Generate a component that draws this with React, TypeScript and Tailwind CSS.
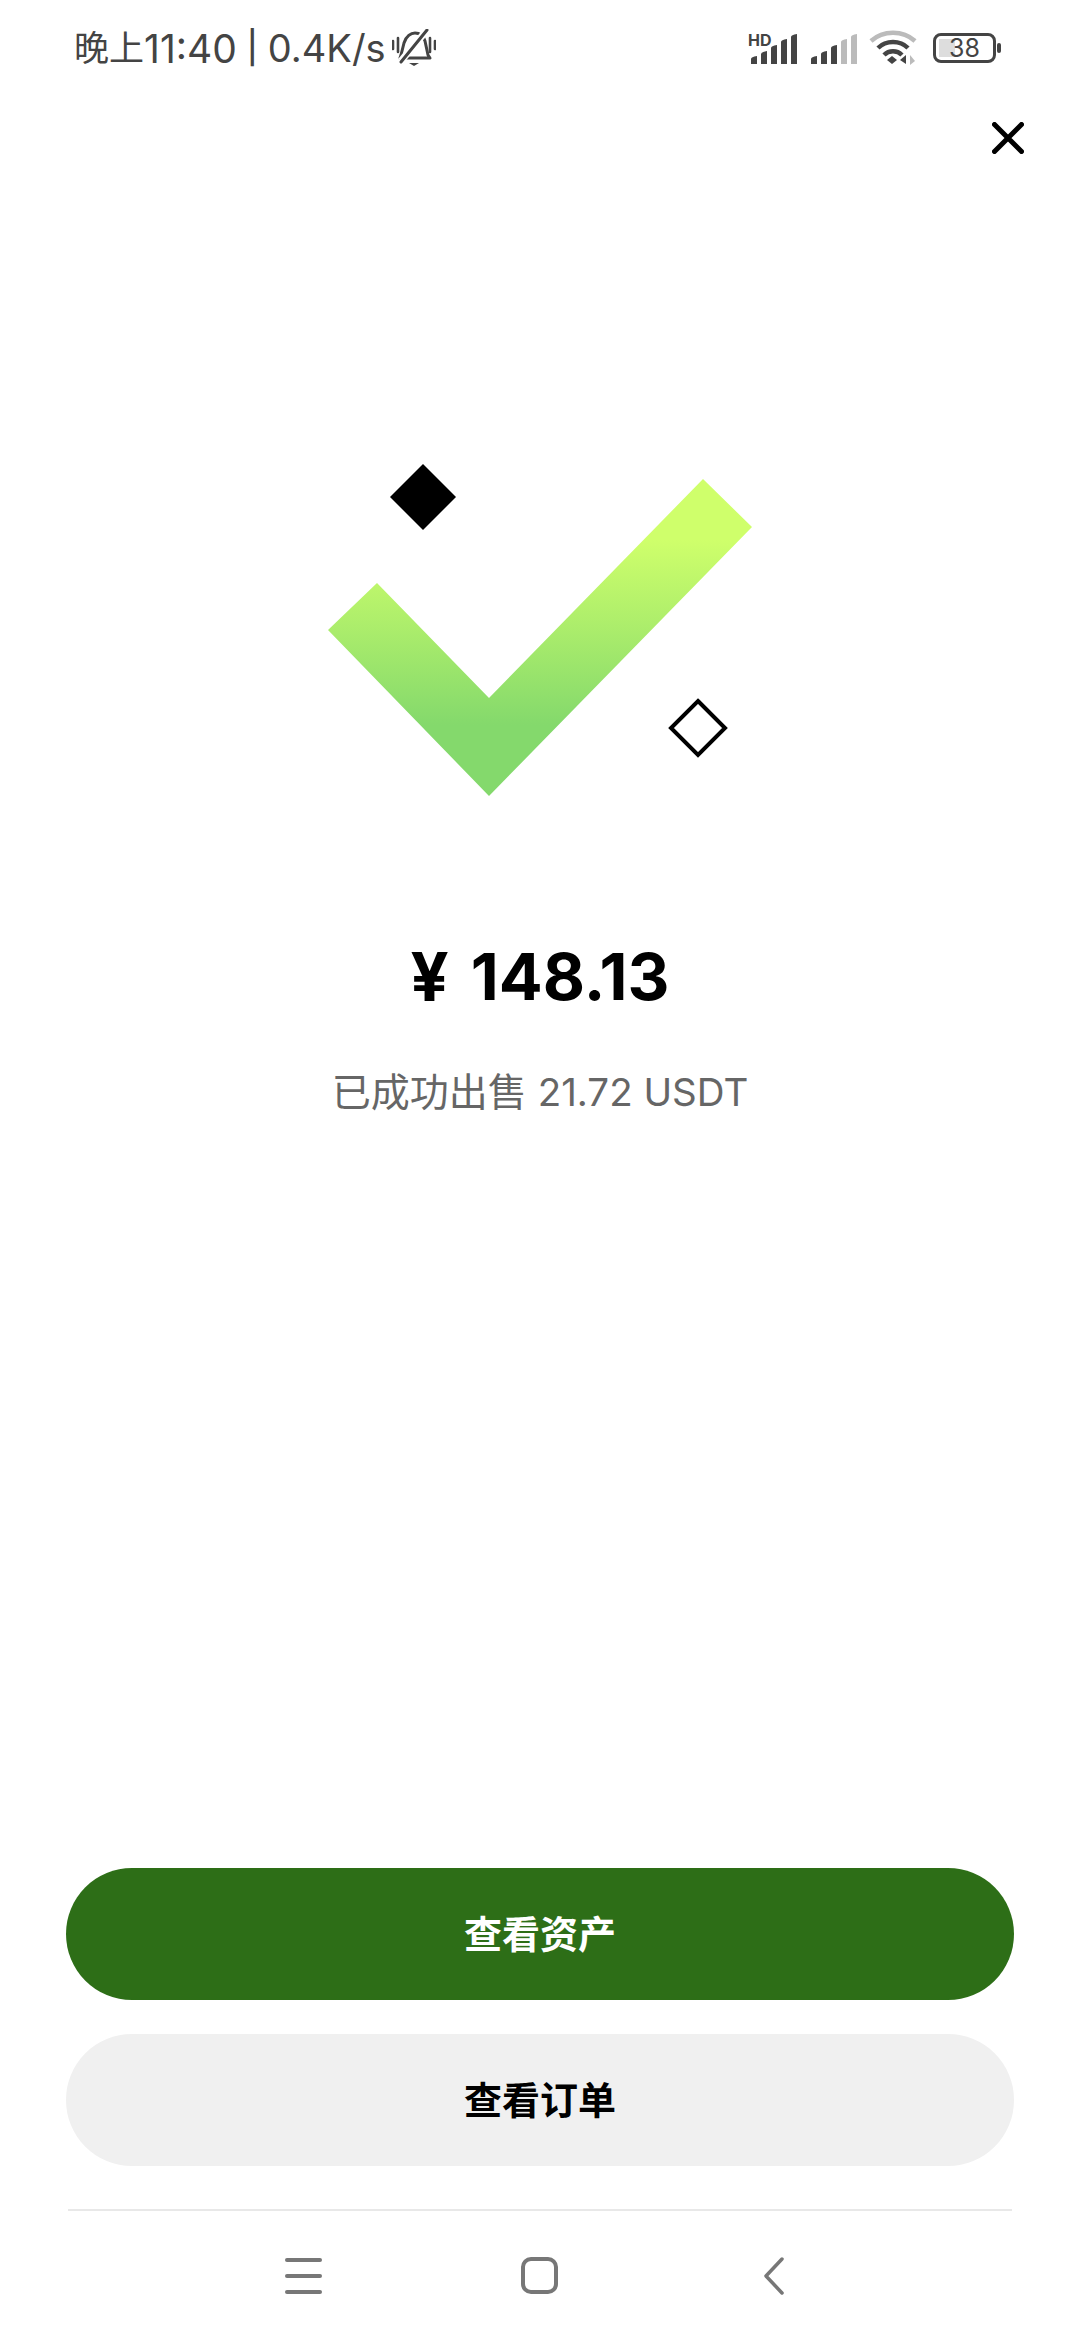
const sans = "font-['Inter','Noto_Sans_CJK_SC',sans-serif]";

function MuteBell() {
  return (
    <svg width="44" height="38" viewBox="0 0 44 38" fill="none" stroke="#444" strokeWidth="3" className="ml-[6px]">
      <path d="M9 26 L12 14 C14 7 19 4 23 4 C27 4 31 6 33 12 L36 26 L38 29 H8 Z" strokeLinejoin="round" />
      <path d="M17 34 H27 L22 37 Z" fill="#444" stroke="none" />
      <path d="M9 32 L35 1" stroke="#fff" strokeWidth="7" />
      <path d="M9 33 L35 1" strokeLinecap="round" />
      <path d="M1 12 V20 M6 9 V23 M38 9 V23 M43 12 V20" strokeWidth="2.6" strokeLinecap="round" />
    </svg>
  );
}

function Signal({ dim = 0 }: { dim?: number }) {
  const tops = [23, 18, 12, 6, 1];
  return (
    <svg width="47" height="31" viewBox="0 0 47 31">
      {tops.map((top, i) => (
        <path
          key={i}
          d={`M${i * 10} 31 V${top + 3} Q${i * 10} ${top + 1} ${i * 10 + 6} ${top} V31 Z`}
          fill={i >= 5 - dim ? "#bbb" : "#444"}
        />
      ))}
    </svg>
  );
}

function Wifi() {
  return (
    <svg width="48" height="36" viewBox="0 0 48 36" fill="none" strokeWidth="4.5" className="ml-[11px]">
      <path d="M2 11 C14 0 34 0 46 11" stroke="#bbb" />
      <path d="M9 18 C17 10 31 10 39 18" stroke="#444" />
      <path d="M15 25 C20 20 28 20 33 25" stroke="#444" />
      <path d="M18 30 L23 26 L28 30 L23 34 Z" fill="#444" stroke="none" />
      <path d="M37 25 V34 L31 30 Z" fill="#444" stroke="none" />
      <path d="M41 25 V35 L46 31 Z" fill="#bbb" stroke="none" />
    </svg>
  );
}

function Battery() {
  return (
    <div className="ml-[16px] flex items-center">
      <div className="relative h-[30px] w-[63px] overflow-hidden rounded-[8px] border-[3px] border-[#444]">
        <div className="absolute inset-y-[3px] left-[3px] w-[16px] bg-[#ddd]" />
        <span className={`absolute inset-0 flex items-center justify-center text-[25px] leading-none font-normal text-[#444] ${sans}`}>38</span>
      </div>
      <div className="ml-[1px] h-[10px] w-[4px] rounded-[2px] bg-[#444]" />
    </div>
  );
}

function StatusBar() {
  return (
    <div className={`flex h-[96px] items-center justify-between pr-[79px] pl-[74px] text-[#444] ${sans}`}>
      <div className="flex items-center leading-none">
        <span className="text-[35px]">晚上</span>
        <span className="text-[39px]">11:40</span>
        <span className="ml-[10px] text-[32px] font-medium">|</span>
        <span className="ml-[10px] text-[38px]">0.4K/s</span>
        <MuteBell />
      </div>
      <div className="relative flex items-center">
        <span className="absolute top-[2px] left-[-3px] text-[16px] leading-none font-bold">HD</span>
        <Signal />
        <div className="ml-[13px]">
          <Signal dim={2} />
        </div>
        <Wifi />
        <Battery />
      </div>
    </div>
  );
}

function CheckHero() {
  return (
    <svg width="440" height="330" viewBox="0 0 440 330" className="mx-auto mt-[316px] block overflow-visible">
      <defs>
        <linearGradient id="check" gradientUnits="userSpaceOnUse" x1="0" y1="70" x2="0" y2="255">
          <stop offset="0" stopColor="#cfff6b" />
          <stop offset="1" stopColor="#84d96c" />
        </linearGradient>
      </defs>
      <path d="M8 160 L57 113 L169 228 L383 9 L432 57 L169 326 Z" fill="url(#check)" />
      <path d="M103 -6 L136 27 L103 60 L70 27 Z" fill="#000" />
      <path d="M378 231 L405 258 L378 285 L351 258 Z" fill="#fff" stroke="#000" strokeWidth="4" />
    </svg>
  );
}

function NavBar() {
  return (
    <div className="relative flex flex-1 items-center justify-center">
      <div className="mr-[11px] flex items-center">
        <div className="flex w-[37px] flex-col gap-[12px]">
          <div className="h-[4px] rounded-full bg-[#777]" />
          <div className="h-[4px] rounded-full bg-[#777]" />
          <div className="h-[4px] rounded-full bg-[#777]" />
        </div>
        <div className="ml-[199px] h-[37px] w-[37px] rounded-[10px] border-4 border-[#777]" />
        <svg width="20" height="38" viewBox="0 0 20 38" fill="none" stroke="#777" strokeWidth="3.5" strokeLinecap="round" strokeLinejoin="round" className="ml-[206px]">
          <path d="M18 2 L2 19 L18 36" />
        </svg>
      </div>
    </div>
  );
}

export default function App() {
  return (
    <div className={`flex h-[2340px] w-[1080px] flex-col bg-white ${sans}`}>
      <StatusBar />
      <div className="flex justify-end pt-[26px] pr-[56px]">
        <svg width="32" height="32" viewBox="0 0 32 32" stroke="#000" strokeWidth="5" strokeLinecap="round">
          <path d="M2.5 2.5 L29.5 29.5 M29.5 2.5 L2.5 29.5" />
        </svg>
      </div>
      <CheckHero />
      <div className="mt-[137px] flex items-center justify-center gap-[22px] leading-[80px] font-bold text-black">
        <span className="text-[67px]">¥</span>
        <span className="text-[65px]">148.13</span>
      </div>
      <div className="mt-[47px] flex items-center justify-center gap-[11px] text-[#666]">
        <span className="text-[39px] leading-[56px]">已成功出售</span>
        <span className="text-[38.5px] leading-[56px]">21.72 USDT</span>
      </div>
      <div className="flex-1" />
      <div className="flex flex-col gap-[34px] px-[66px]">
        <button className="h-[132px] rounded-full bg-[#2d6e17] text-[38px] font-bold text-white">查看资产</button>
        <button className="h-[132px] rounded-full bg-[#f0f0f0] text-[38px] font-bold text-black">查看订单</button>
      </div>
      <div className="mx-[68px] mt-[43px] h-[2px] bg-[#e8e8e8]" />
      <div className="flex h-[129px]">
        <NavBar />
      </div>
    </div>
  );
}
